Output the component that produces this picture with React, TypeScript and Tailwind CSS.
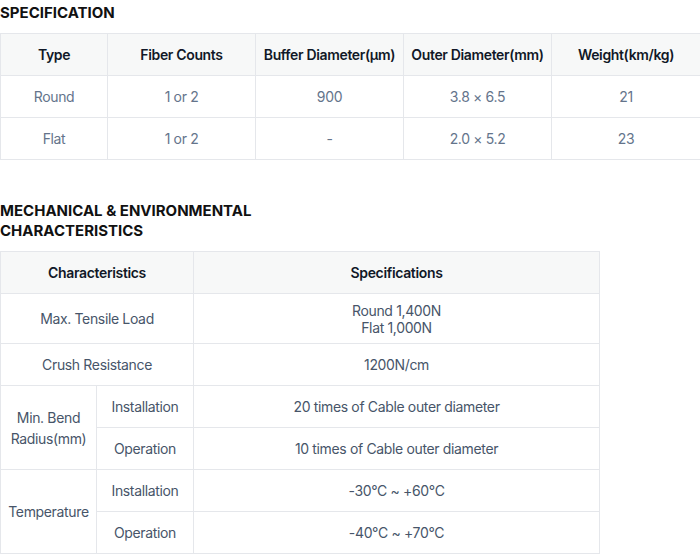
const font = { fontFamily: "Inter, 'Noto Sans', sans-serif" };

const specRows = [
  ["Round", "1 or 2", "900", "3.8 × 6.5", "21"],
  ["Flat", "1 or 2", "-", "2.0 × 5.2", "23"],
];

const th = "border border-[#e5e7eb] bg-[#f7f8f8] h-[42px] p-0 text-center text-[14px] tracking-[-0.025em] font-semibold text-[#111827]";
const td1 = "border border-[#e5e7eb] h-[42px] p-0 text-center text-[14px] tracking-[-0.025em] text-[#64748b]";
const td2 = "border border-[#e5e7eb] h-[42px] p-0 text-center text-[14px] tracking-[-0.025em] text-[#475569]";

export default function App() {
  return (
    <div className="w-[700px] h-[554px] bg-white overflow-hidden" style={font}>
      <h2 className="pt-[3px] mb-[10px] text-[15px] leading-5 font-bold text-[#111]">SPECIFICATION</h2>
      <table className="w-[700px] border-collapse table-fixed">
        <colgroup>
          <col className="w-[107px]" />
          <col className="w-[148px]" />
          <col className="w-[148px]" />
          <col className="w-[148px]" />
          <col className="w-[149px]" />
        </colgroup>
        <thead>
          <tr>
            <th className={th}>Type</th>
            <th className={th}>Fiber Counts</th>
            <th className={th}>Buffer Diameter(μm)</th>
            <th className={th}>Outer Diameter(mm)</th>
            <th className={th}>Weight(km/kg)</th>
          </tr>
        </thead>
        <tbody>
          {specRows.map((r) => (
            <tr key={r[0]}>
              {r.map((c, i) => (
                <td key={i} className={td1}>{c}</td>
              ))}
            </tr>
          ))}
        </tbody>
      </table>

      <h2 className="mt-[41px] mb-[10px] text-[15px] leading-5 font-bold text-[#111]">
        MECHANICAL &amp; ENVIRONMENTAL
        <br />
        CHARACTERISTICS
      </h2>
      <table className="w-[599px] border-collapse table-fixed">
        <colgroup>
          <col className="w-[96px]" />
          <col className="w-[97px]" />
          <col className="w-[406px]" />
        </colgroup>
        <thead>
          <tr>
            <th colSpan={2} className={th}>Characteristics</th>
            <th className={th}>Specifications</th>
          </tr>
        </thead>
        <tbody>
          <tr>
            <td colSpan={2} className={`${td2} h-[50px]`}>Max. Tensile Load</td>
            <td className={`${td2} h-[50px] leading-[17px] text-[#6b7280]`}>
              Round 1,400N
              <br />
              Flat 1,000N
            </td>
          </tr>
          <tr>
            <td colSpan={2} className={td2}>Crush Resistance</td>
            <td className={td2}>1200N/cm</td>
          </tr>
          <tr>
            <td rowSpan={2} className={`${td2} leading-[21px]`}>
              Min. Bend
              <br />
              Radius(mm)
            </td>
            <td className={td2}>Installation</td>
            <td className={td2}>20 times of Cable outer diameter</td>
          </tr>
          <tr>
            <td className={td2}>Operation</td>
            <td className={td2}>10 times of Cable outer diameter</td>
          </tr>
          <tr>
            <td rowSpan={2} className={td2}>Temperature</td>
            <td className={td2}>Installation</td>
            <td className={td2}>-30°C ~ +60°C</td>
          </tr>
          <tr>
            <td className={td2}>Operation</td>
            <td className={td2}>-40°C ~ +70°C</td>
          </tr>
        </tbody>
      </table>
    </div>
  );
}
